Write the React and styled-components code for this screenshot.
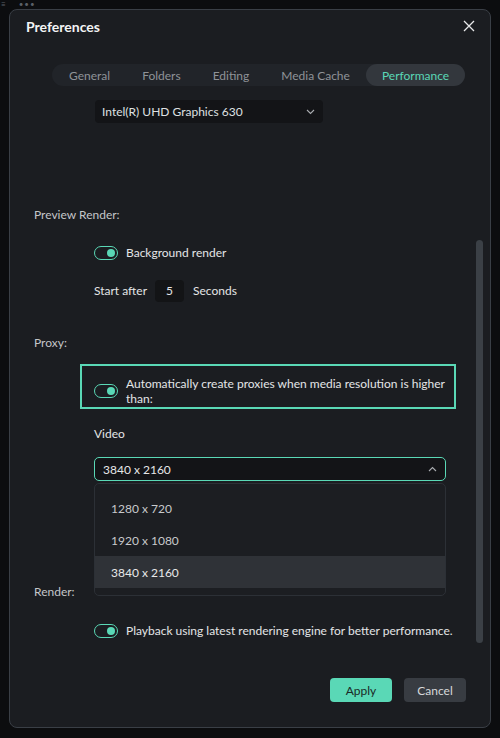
import React from "react";
import styled, { createGlobalStyle } from "styled-components";

const GlobalStyle = createGlobalStyle`
  html, body {
    margin: 0;
    background: #0c0d0f;
  }
  body {
    font-family: Lato, "Noto Sans", sans-serif;
    -webkit-font-smoothing: antialiased;
  }
`;

const Page = styled.div`
  position: relative;
  width: 500px;
  height: 738px;
  box-sizing: border-box;
  padding: 9px 9px 10px 9px;
  overflow: hidden;
`;

const Backdrop = styled.div`
  position: absolute;
  top: 0;
  left: 1px;
  display: flex;
  align-items: center;
  gap: 12px;
  height: 9px;
  color: #5b6068;
  font-size: 8px;
  line-height: 9px;
  letter-spacing: 1px;
`;

const Dialog = styled.div`
  height: 100%;
  box-sizing: border-box;
  border: 1px solid #3a3f46;
  border-radius: 8px;
  background: #1b1d21;
  display: flex;
  flex-direction: column;
`;

const Header = styled.div`
  height: 32px;
  display: flex;
  align-items: center;
  justify-content: space-between;
  padding: 0 14px 0 16px;
`;

const Title = styled.div`
  color: #f3f4f5;
  font-size: 14px;
  font-weight: 700;
`;

const CloseButton = styled.button`
  border: none;
  background: none;
  padding: 0;
  width: 14px;
  height: 14px;
  display: flex;
  align-items: center;
  justify-content: center;
  cursor: pointer;
`;

const TabBar = styled.div`
  margin: 22px 0 0 42px;
  width: 411px;
  height: 22px;
  box-sizing: border-box;
  padding-left: 1px;
  border-radius: 11px;
  background: #212429;
  display: flex;
  align-items: center;
`;

const Tab = styled.div`
  height: 22px;
  display: flex;
  align-items: center;
  padding: 0 16px;
  border-radius: 11px;
  white-space: nowrap;
  font-size: 12px;
  color: ${(p) => (p.$active ? "#5ad8b6" : "#8f9398")};
  background: ${(p) => (p.$active ? "#33373d" : "transparent")};
  margin-left: ${(p) => (p.$active ? "auto" : "0")};
`;

const Body = styled.div`
  height: 569px;
  display: flex;
`;

const Content = styled.div`
  flex: 1;
  padding-left: 24px;
  display: flex;
  flex-direction: column;
  align-items: flex-start;
`;

const ScrollTrack = styled.div`
  width: 7px;
  margin-right: 7px;
  padding-top: 154px;
`;

const ScrollThumb = styled.div`
  height: 403px;
  border-radius: 4px;
  background: #3b4046;
`;

const GpuSelect = styled.div`
  margin: 14px 0 0 61px;
  width: 228px;
  height: 23px;
  box-sizing: border-box;
  padding: 0 8px 0 7px;
  border-radius: 4px;
  background: #131417;
  display: flex;
  align-items: center;
  justify-content: space-between;
  color: #dfe0e2;
  font-size: 12px;
`;

const SectionLabel = styled.div`
  margin-top: ${(p) => p.$top}px;
  color: #c4c6c9;
  font-size: 12px;
  line-height: 16px;
`;

const Indent = styled.div`
  margin: ${(p) => p.$top}px 0 0 60px;
  display: flex;
  align-items: center;
  gap: 8px;
  white-space: nowrap;
  color: #e4e5e7;
  font-size: 12px;
  line-height: 16px;
`;

const SwitchTrack = styled.div`
  flex: none;
  position: relative;
  width: 24px;
  height: 14px;
  box-sizing: border-box;
  border: 1.5px solid #5ad8b6;
  border-radius: 8px;
  background: #1b1d21;
`;

const SwitchKnob = styled.div`
  position: absolute;
  top: 1.5px;
  right: 2px;
  width: 8px;
  height: 8px;
  border-radius: 50%;
  background: #5ad8b6;
`;

const NumberBox = styled.div`
  width: 29px;
  height: 22px;
  border-radius: 4px;
  background: #131416;
  display: flex;
  align-items: center;
  justify-content: center;
  color: #e4e5e7;
  margin-right: 1px;
`;

const Highlight = styled.div`
  margin: 13px 0 0 46px;
  width: 376px;
  height: 45px;
  box-sizing: border-box;
  border: 2px solid #5ad8b6;
  padding: 9px 4px 0 12px;
  display: flex;
  align-items: center;
  gap: 8px;
  color: #e4e5e7;
  font-size: 12px;
  line-height: 15px;
`;

const SelectWrap = styled.div`
  position: relative;
  margin: 15px 0 0 60px;
  width: 352px;
`;

const Select = styled.div`
  height: 24px;
  box-sizing: border-box;
  border: 1px solid #5ad8b6;
  border-radius: 5px;
  background: #131417;
  padding: 0 8px 0 8px;
  display: flex;
  align-items: center;
  justify-content: space-between;
  color: #e6e7e8;
  font-size: 12px;
`;

const Menu = styled.div`
  position: absolute;
  top: 26px;
  left: 0;
  right: 0;
  height: 113px;
  box-sizing: border-box;
  padding-top: 8px;
  border: 1px solid #2c3036;
  border-radius: 5px;
  background: #1c1e22;
  z-index: 2;
`;

const MenuItem = styled.div`
  height: 32px;
  padding-left: 16px;
  display: flex;
  align-items: center;
  font-size: 12px;
  color: ${(p) => (p.$selected ? "#e8e9ea" : "#c8cacc")};
  background: ${(p) => (p.$selected ? "#2f3237" : "transparent")};
`;

const Footer = styled.div`
  flex: 1;
  display: flex;
  justify-content: flex-end;
  align-items: flex-start;
  gap: 12px;
  padding: 23px 24px 0 0;
`;

const Button = styled.button`
  width: 62px;
  height: 24px;
  border: none;
  border-radius: 4px;
  font-family: inherit;
  font-size: 12px;
  cursor: pointer;
  color: ${(p) => (p.$primary ? "#1b2a26" : "#d6d8da")};
  background: ${(p) => (p.$primary ? "#5ad8b6" : "#383c42")};
`;

const Chevron = ({ up }) => (
  <svg width="9" height="6" viewBox="0 0 9 6">
    <path
      d={up ? "M1 5 L4.5 1.5 L8 5" : "M1 1 L4.5 4.5 L8 1"}
      fill="none"
      stroke="#a9acb0"
      strokeWidth="1.1"
    />
  </svg>
);

const Switch = () => (
  <SwitchTrack>
    <SwitchKnob />
  </SwitchTrack>
);

const tabs = ["General", "Folders", "Editing", "Media Cache", "Performance"];
const sizes = ["1280 x 720", "1920 x 1080", "3840 x 2160"];

export default function App() {
  return (
    <>
      <GlobalStyle />
      <Page>
        <Backdrop>
          <span>≡</span>
          <span>•••</span>
        </Backdrop>
        <Dialog>
          <Header>
            <Title>Preferences</Title>
            <CloseButton aria-label="Close">
              <svg width="12" height="12" viewBox="0 0 12 12">
                <path d="M1 1 L11 11 M11 1 L1 11" stroke="#e8e9ea" strokeWidth="1.3" />
              </svg>
            </CloseButton>
          </Header>

          <TabBar>
            {tabs.map((t) => (
              <Tab key={t} $active={t === "Performance"}>
                {t}
              </Tab>
            ))}
          </TabBar>

          <Body>
            <Content>
              <GpuSelect>
                <span>Intel(R) UHD Graphics 630</span>
                <Chevron />
              </GpuSelect>

              <SectionLabel $top={84}>Preview Render:</SectionLabel>
              <Indent $top={22}>
                <Switch />
                <span>Background render</span>
              </Indent>
              <Indent $top={19}>
                <span>Start after</span>
                <NumberBox>5</NumberBox>
                <span>Seconds</span>
              </Indent>

              <SectionLabel $top={33}>Proxy:</SectionLabel>
              <Highlight>
                <Switch />
                <span>Automatically create proxies when media resolution is higher than:</span>
              </Highlight>
              <Indent $top={17}>
                <span>Video</span>
              </Indent>
              <SelectWrap>
                <Select>
                  <span>3840 x 2160</span>
                  <Chevron up />
                </Select>
                <Menu>
                  {sizes.map((s) => (
                    <MenuItem key={s} $selected={s === "3840 x 2160"}>
                      {s}
                    </MenuItem>
                  ))}
                </Menu>
              </SelectWrap>

              <SectionLabel $top={103}>Render:</SectionLabel>
              <Indent $top={23}>
                <Switch />
                <span>Playback using latest rendering engine for better performance.</span>
              </Indent>
            </Content>
            <ScrollTrack>
              <ScrollThumb />
            </ScrollTrack>
          </Body>

          <Footer>
            <Button $primary>Apply</Button>
            <Button>Cancel</Button>
          </Footer>
        </Dialog>
      </Page>
    </>
  );
}
